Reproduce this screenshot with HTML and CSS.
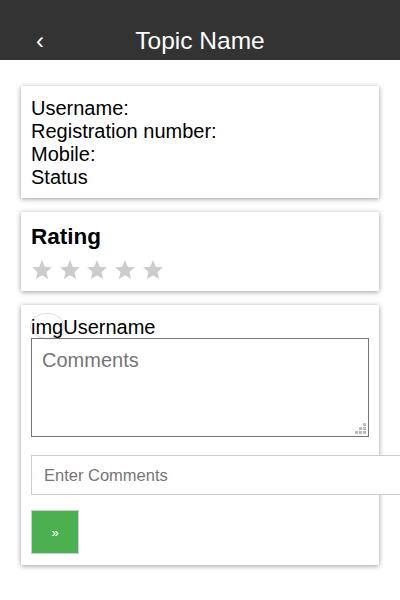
FILE: index.html
```html
<!DOCTYPE html>
<html lang="en">
<head>
<meta charset="utf-8">
<title>Topic Name</title>
<link rel="stylesheet" href="styles.css">
</head>
<body>
<header class="topbar">
  <a class="back" href="#">‹</a>
  <h1 class="title">Topic Name</h1>
  <span class="spacer"></span>
</header>
<main class="content">
  <section class="card info">
    <div>Username:</div>
    <div>Registration number:</div>
    <div>Mobile:</div>
    <div>Status</div>
  </section>
  <section class="card rating">
    <h2 class="rating-title">Rating</h2>
    <div class="stars">
      <svg class="star" viewBox="0 0 20 20"><polygon points="10,0 12.76,6.7 20,7.26 14.47,11.95 16.17,19 10,15.2 3.83,19 5.53,11.95 0,7.26 7.24,6.7"/></svg>
      <svg class="star" viewBox="0 0 20 20"><polygon points="10,0 12.76,6.7 20,7.26 14.47,11.95 16.17,19 10,15.2 3.83,19 5.53,11.95 0,7.26 7.24,6.7"/></svg>
      <svg class="star" viewBox="0 0 20 20"><polygon points="10,0 12.76,6.7 20,7.26 14.47,11.95 16.17,19 10,15.2 3.83,19 5.53,11.95 0,7.26 7.24,6.7"/></svg>
      <svg class="star" viewBox="0 0 20 20"><polygon points="10,0 12.76,6.7 20,7.26 14.47,11.95 16.17,19 10,15.2 3.83,19 5.53,11.95 0,7.26 7.24,6.7"/></svg>
      <svg class="star" viewBox="0 0 20 20"><polygon points="10,0 12.76,6.7 20,7.26 14.47,11.95 16.17,19 10,15.2 3.83,19 5.53,11.95 0,7.26 7.24,6.7"/></svg>
    </div>
  </section>
  <section class="card comments">
    <div class="user-row"><span class="avatar">img</span>Username</div>
    <div class="box-wrap">
      <textarea class="comment-box" placeholder="Comments"></textarea>
      <svg class="grip" viewBox="0 0 11 11"><rect x="8" y="0" width="3" height="3"/><rect x="4" y="4" width="3" height="3"/><rect x="8" y="4" width="3" height="3"/><rect x="0" y="8" width="3" height="3"/><rect x="4" y="8" width="3" height="3"/><rect x="8" y="8" width="3" height="3"/></svg>
    </div>
    <input class="comment-input" type="text" placeholder="Enter Comments">
    <button class="send" type="button">»</button>
  </section>
</main>
</body>
</html>
```

FILE: styles.css
```css
html, body {
  margin: 0;
  padding: 0;
  background: #fff;
  font-family: "Liberation Sans", Arial, sans-serif;
  color: #000;
}

.topbar {
  height: 60px;
  box-sizing: border-box;
  background: #333;
  color: #fff;
  display: grid;
  grid-template-columns: 1fr auto 1fr;
  align-items: start;
  padding-top: 27px;
}

.back {
  color: #fff;
  text-decoration: none;
  font-size: 24px;
  line-height: 28px;
  padding-left: 36px;
}

.title {
  margin: 0;
  font-size: 24.5px;
  font-weight: normal;
  line-height: 28px;
}

.content {
  padding: 26px 21px 30px;
  display: flex;
  flex-direction: column;
  gap: 14px;
}

.card {
  background: #fff;
  box-shadow: 0 1px 5px rgba(0, 0, 0, 0.4);
  padding: 11px 10px 9px;
}

.info {
  font-size: 20px;
  line-height: 23px;
}

.rating {
  padding: 12px 10px 11px;
}

.rating-title {
  margin: 0;
  font-size: 22.5px;
  font-weight: bold;
  line-height: 26px;
}

.stars {
  display: flex;
  gap: 7.7px;
  margin-top: 10px;
  padding-left: 1px;
}

.star {
  width: 20px;
  height: 20px;
  fill: #ccc;
  display: block;
}

.comments {
  padding: 11px 10px 11px;
}

.user-row {
  font-size: 20px;
  line-height: 22px;
  height: 22px;
}

.avatar {
  display: inline-block;
  vertical-align: top;
  border: 1px solid #ddd;
  border-radius: 50%;
  margin: -3px -1px 0;
  padding-top: 2px;
  line-height: 22px;
}

.box-wrap {
  position: relative;
}

.comment-box {
  display: block;
  width: 100%;
  box-sizing: border-box;
  height: 99px;
  margin: 0;
  border: 1px solid #767676;
  padding: 10px;
  font-family: "Liberation Sans", Arial, sans-serif;
  font-size: 20px;
  line-height: 23px;
  resize: none;
}

.comment-box::placeholder {
  color: #757575;
}

.grip {
  position: absolute;
  right: 3px;
  bottom: 3px;
  width: 11px;
  height: 11px;
  fill: #bbb;
}

.comment-input {
  display: block;
  width: 100%;
  box-sizing: content-box;
  height: 38px;
  margin: 18px 0 0;
  padding: 0 20px 0 12px;
  border: 1px solid #ccc;
  font-family: "Liberation Sans", Arial, sans-serif;
  font-size: 16.5px;
  outline: none;
}

.comment-input::placeholder {
  color: #757575;
}

.send {
  display: block;
  margin-top: 15px;
  width: 48px;
  height: 44px;
  background: #4caf50;
  border: 1px solid #ccc;
  color: #fff;
  font-family: "Liberation Sans", Arial, sans-serif;
  font-size: 13px;
  padding: 0;
}
```
